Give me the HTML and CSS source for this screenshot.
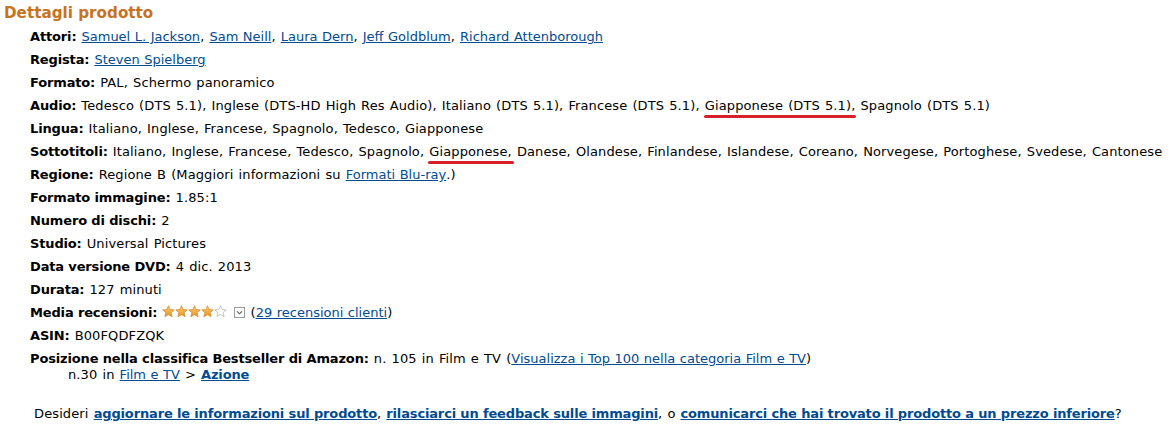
FILE: index.html
```html
<!DOCTYPE html>
<html lang="it">
<head>
<meta charset="utf-8">
<title>Dettagli prodotto</title>
<link rel="stylesheet" href="styles.css">
</head>
<body>
<div class="details">
  <h2 class="title">Dettagli prodotto</h2>
  <ul class="list">
    <li><b>Attori:</b> <a href="#">Samuel L. Jackson</a>, <a href="#">Sam Neill</a>, <a href="#">Laura Dern</a>, <a href="#">Jeff Goldblum</a>, <a href="#">Richard Attenborough</a></li>
    <li><b>Regista:</b> <a href="#">Steven Spielberg</a></li>
    <li><b>Formato:</b> PAL, Schermo panoramico</li>
    <li><b>Audio:</b> Tedesco (DTS 5.1), Inglese (DTS-HD High Res Audio), Italiano (DTS 5.1), Francese (DTS 5.1), <span class="mark mark-a">Giapponese (DTS 5.1)</span>, Spagnolo (DTS 5.1)</li>
    <li><b>Lingua:</b> Italiano, Inglese, Francese, Spagnolo, Tedesco, Giapponese</li>
    <li><b>Sottotitoli:</b> Italiano, Inglese, Francese, Tedesco, Spagnolo, <span class="mark mark-b">Giapponese</span>, Danese, Olandese, Finlandese, Islandese, Coreano, Norvegese, Portoghese, Svedese, Cantonese</li>
    <li><b>Regione:</b> Regione B (Maggiori informazioni su <a href="#">Formati Blu-ray</a>.)</li>
    <li><b>Formato immagine:</b> 1.85:1</li>
    <li><b>Numero di dischi:</b> 2</li>
    <li><b>Studio:</b> Universal Pictures</li>
    <li><b>Data versione DVD:</b> 4 dic. 2013</li>
    <li><b>Durata:</b> 127 minuti</li>
    <li><b>Media recensioni:</b> <span class="stars"><svg width="66" height="13" viewBox="0 0 66 13" aria-hidden="true">
      <defs>
        <linearGradient id="g" x1="0" y1="0" x2="0" y2="1">
          <stop offset="0" stop-color="#fcd27a"/>
          <stop offset="1" stop-color="#e8911e"/>
        </linearGradient>
        <path id="s" d="M6.5 0.8 L8.1 4.6 L12.2 4.9 L9.1 7.6 L10.1 11.7 L6.5 9.5 L2.9 11.7 L3.9 7.6 L0.8 4.9 L4.9 4.6 Z"/>
      </defs>
      <use href="#s" x="0" fill="url(#g)" stroke="#d68a2a" stroke-width="0.8"/>
      <use href="#s" x="13" fill="url(#g)" stroke="#d68a2a" stroke-width="0.8"/>
      <use href="#s" x="26" fill="url(#g)" stroke="#d68a2a" stroke-width="0.8"/>
      <use href="#s" x="39" fill="url(#g)" stroke="#d68a2a" stroke-width="0.8"/>
      <use href="#s" x="52" fill="#fff" stroke="#b8b8b8" stroke-width="0.8"/>
    </svg></span><span class="drop"><svg width="11" height="11" viewBox="0 0 11 11" aria-hidden="true"><rect x="0.5" y="0.5" width="10" height="10" fill="#fff" stroke="#9a9a9a"/><path d="M3 4.3 L5.5 6.8 L8 4.3" fill="none" stroke="#555" stroke-width="1.1"/></svg></span> (<a href="#">29 recensioni clienti</a>)</li>
    <li><b>ASIN:</b> B00FQDFZQK</li>
    <li><b>Posizione nella classifica Bestseller di Amazon:</b> n. 105 in Film e TV (<a href="#">Visualizza i Top 100 nella categoria Film e TV</a>)
      <div class="sub">n.30 in <a href="#">Film e TV</a> &gt; <a href="#" class="strong">Azione</a></div>
    </li>
  </ul>
  <p class="feedback">Desideri <a href="#" class="strong">aggiornare le informazioni sul prodotto</a>, <a href="#" class="strong">rilasciarci un feedback sulle immagini</a>, o <a href="#" class="strong">comunicarci che hai trovato il prodotto a un prezzo inferiore</a>?</p>
</div>
</body>
</html>
```

FILE: styles.css
```css
html, body {
  margin: 0;
  padding: 0;
  background: #fff;
}
body {
  font-family: Verdana, "DejaVu Sans", sans-serif;
  font-size: 13px;
  color: #000;
  letter-spacing: 0.12px;
  word-spacing: 0.8px;
}
.details {
  padding: 4px 0 0 4px;
}
.title {
  margin: 0;
  font-size: 15.2px;
  line-height: 19px;
  font-weight: bold;
  color: #c8731f;
  letter-spacing: 0;
  word-spacing: 0;
}
.list {
  list-style: none;
  margin: 5px 0 0 0;
  padding: 0 0 0 26px;
}
.list li {
  line-height: 17px;
  margin-bottom: 6px;
  white-space: nowrap;
}
.list b {
  font-weight: bold;
  letter-spacing: -0.15px;
  word-spacing: 0;
}
a {
  color: #004b91;
  text-decoration: underline;
  letter-spacing: 0;
  word-spacing: 0.4px;
}
a.strong {
  font-weight: bold;
  letter-spacing: -0.15px;
  word-spacing: 0;
}
.sub {
  padding-left: 38px;
  margin-top: -1px;
}
.mark {
  position: relative;
}
.mark::after {
  content: "";
  position: absolute;
  left: -1px;
  right: -5px;
  bottom: -5px;
  height: 3px;
  border-radius: 2px;
  background: #d8202c;
}
.mark-b::after {
  right: -6px;
}
.stars {
  display: inline-block;
  vertical-align: -1px;
  margin-right: 6px;
}
.stars svg, .drop svg {
  display: block;
}
.drop {
  display: inline-block;
  vertical-align: -1px;
}
.feedback {
  margin: 22px 0 0 30px;
  line-height: 17px;
}
```
